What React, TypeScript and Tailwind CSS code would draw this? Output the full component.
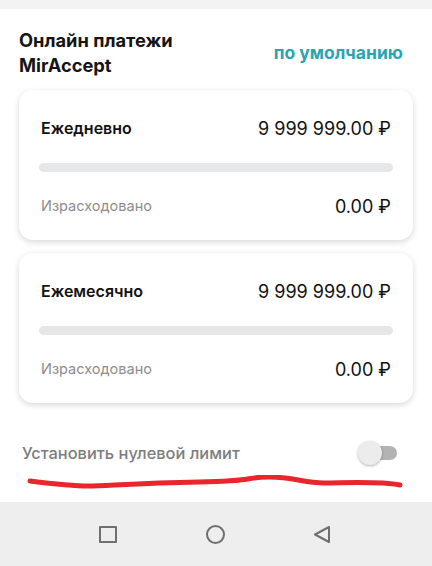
import React from "react";

interface LimitCardProps {
  title: string;
  limit: string;
  spent: string;
}

function LimitCard({ title, limit, spent }: LimitCardProps) {
  return (
    <div className="rounded-[14px] bg-white px-[22px] pt-[27px] pb-[23px] shadow-[0_2px_6px_rgba(0,0,0,0.16)]">
      <div className="flex h-[22px] items-center justify-between">
        <span className="text-[16px] font-semibold text-[#111]">{title}</span>
        <span className="text-[18px] text-[#111]">{limit}</span>
      </div>
      {/* progress */}
      <div className="-mx-[2px] mt-[24px] h-[9px] rounded-full bg-[#e6e7e9]" />
      <div className="mt-[23px] flex h-[22px] items-center justify-between">
        <span className="text-[14.5px] text-[#8d8d8d]">Израсходовано</span>
        <span className="text-[18px] text-[#111]">{spent}</span>
      </div>
    </div>
  );
}

export default function App() {
  return (
    <div className="flex h-[566px] w-full flex-col overflow-hidden bg-white font-['Inter',sans-serif]">
      <div className="h-[9px] bg-[#f3f3f3]" />

      <div className="flex-1 px-[19px]">
        {/* Header */}
        <div className="flex items-center justify-between pt-[19px] pr-[10px]">
          <div className="text-[18.3px] leading-[25px] font-bold text-[#151515]">
            Онлайн платежи
            <br />
            MirAccept
          </div>
          <span className="text-[17.5px] font-bold text-[#2aa5b0]">по умолчанию</span>
        </div>

        {/* Cards */}
        <div className="mt-[12px] flex flex-col gap-[13px]">
          <LimitCard title="Ежедневно" limit="9 999 999.00 ₽" spent="0.00 ₽" />
          <LimitCard title="Ежемесячно" limit="9 999 999.00 ₽" spent="0.00 ₽" />
        </div>

        {/* Zero limit toggle */}
        <div className="mt-[38px] flex items-center justify-between pl-[3px] pr-[16px]">
          <span className="text-[16.4px] font-medium text-[#7d7d7d]">Установить нулевой лимит</span>
          <div className="relative h-[24px] w-[39px]">
            <div className="absolute right-0 top-[5px] h-[14px] w-[30px] rounded-full bg-[#b3b3b3]" />
            <div className="absolute left-0 top-0 h-[24px] w-[24px] rounded-full bg-[#ececec] shadow-[0_1px_3px_rgba(0,0,0,0.3)]" />
          </div>
        </div>

        <svg className="mt-[9px] block" width="394" height="16" viewBox="0 0 394 16">
          <path
            d="M11 6 C 35 9, 55 11, 70 11 S 120 8, 180 7 S 225 2, 250 2 S 285 8, 305 8 S 360 6, 381 10"
            fill="none"
            stroke="#e8262c"
            strokeWidth="5"
            strokeLinecap="round"
          />
        </svg>
      </div>

      {/* Android nav bar */}
      <div className="flex h-[64px] items-center bg-[#eeeeee]">
        <div className="flex w-full items-center justify-between pl-[99px] pr-[101px]">
          <div className="h-[17px] w-[18px] rounded-[1px] border-2 border-[#6f6f6f]" />
          <div className="h-[19px] w-[19px] rounded-full border-2 border-[#6f6f6f]" />
          <svg width="18" height="19" viewBox="0 0 18 19">
            <path d="M16 2 L2 9.5 L16 17 Z" fill="none" stroke="#6f6f6f" strokeWidth="2" strokeLinejoin="round" />
          </svg>
        </div>
      </div>
    </div>
  );
}
